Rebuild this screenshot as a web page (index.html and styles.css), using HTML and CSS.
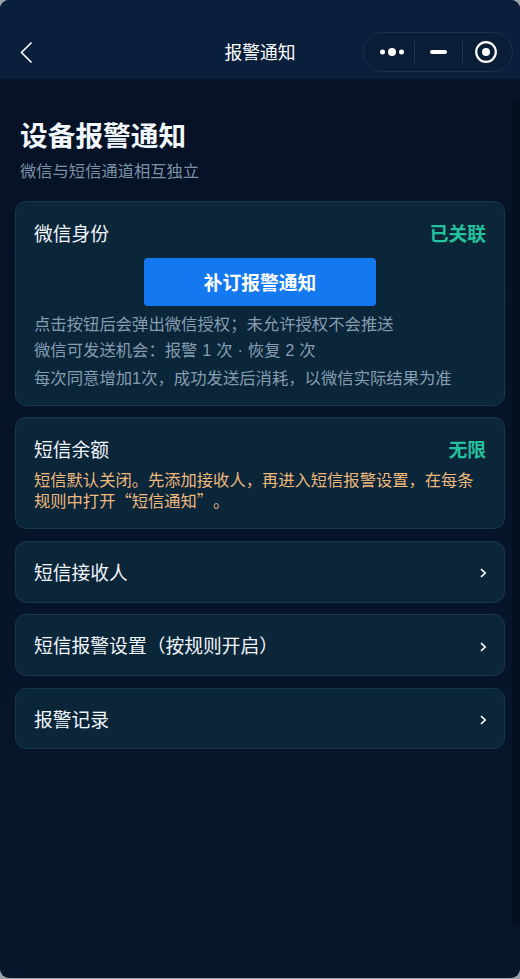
FILE: index.html
```html
<!DOCTYPE html>
<html lang="zh-CN">
<head>
<meta charset="utf-8">
<title>报警通知</title>
<link rel="stylesheet" href="styles.css">
</head>
<body>
<div class="app">
  <header class="nav">
    <button class="back" aria-label="返回">
      <svg width="14" height="24" viewBox="0 0 14 24"><path d="M12.5 2.5 L2.5 12.5 L12.5 22.5" fill="none" stroke="#fff" stroke-width="1.6"/></svg>
    </button>
    <div class="nav-title">报警通知</div>
    <div class="capsule">
      <svg class="cap-dots" width="24" height="12" viewBox="0 0 24 12"><circle cx="2.5" cy="6" r="2.5" fill="#fff"/><circle cx="12" cy="6" r="4" fill="#fff"/><circle cx="21.5" cy="6" r="2.5" fill="#fff"/></svg>
      <span class="cap-sep"></span>
      <span class="cap-min"></span>
      <span class="cap-sep"></span>
      <svg class="cap-target" width="24" height="24" viewBox="0 0 24 24"><circle cx="12" cy="12" r="9.8" fill="none" stroke="#fff" stroke-width="2.2"/><circle cx="12" cy="12" r="4" fill="#fff"/></svg>
    </div>
  </header>
  <main class="content">
    <section class="intro">
      <h1>设备报警通知</h1>
      <p>微信与短信通道相互独立</p>
    </section>
    <section class="card card-wechat">
      <div class="row">
        <span class="card-title">微信身份</span>
        <span class="status">已关联</span>
      </div>
      <button class="primary">补订报警通知</button>
      <div class="notes">
        <p>点击按钮后会弹出微信授权；未允许授权不会推送</p>
        <p class="spaced">微信可发送机会：报警 <span class="latin">1</span> 次 <span class="latin">·</span> 恢复 <span class="latin">2</span> 次</p>
        <p>每次同意增加<span class="latin">1</span>次，成功发送后消耗，以微信实际结果为准</p>
      </div>
    </section>
    <section class="card card-sms">
      <div class="row">
        <span class="card-title">短信余额</span>
        <span class="status">无限</span>
      </div>
      <p class="warn">短信默认关闭。先添加接收人，再进入短信报警设置，在每条规则中打开“短信通知”。</p>
    </section>
    <a class="card link"><span class="card-title">短信接收人</span><span class="chev"><svg width="7" height="10" viewBox="0 0 7 10"><path d="M1 1.2 L5.2 5 L1 8.8" fill="none" stroke="#fff" stroke-width="1.6"/></svg></span></a>
    <a class="card link"><span class="card-title">短信报警设置（按规则开启）</span><span class="chev"><svg width="7" height="10" viewBox="0 0 7 10"><path d="M1 1.2 L5.2 5 L1 8.8" fill="none" stroke="#fff" stroke-width="1.6"/></svg></span></a>
    <a class="card link"><span class="card-title">报警记录</span><span class="chev"><svg width="7" height="10" viewBox="0 0 7 10"><path d="M1 1.2 L5.2 5 L1 8.8" fill="none" stroke="#fff" stroke-width="1.6"/></svg></span></a>
  </main>
  <div class="scroll-track"></div>
</div>
</body>
</html>
```
FILE: styles.css
```css
* { box-sizing: border-box; }
html, body { margin: 0; padding: 0; height: 979px; overflow: hidden; background: #9aa3ab; }
body { font-family: "Noto Sans CJK SC", "Noto Sans", sans-serif; text-spacing-trim: space-all; }
p, h1 { margin: 0; }
.app {
  position: relative;
  height: 978px;
  border-radius: 9px;
  overflow: hidden;
  background: linear-gradient(180deg, #061125 0%, #06172c 100%);
  color: #fff;
}
.nav {
  position: relative;
  height: 79px;
  background: #0a1f3b;
  display: flex;
  align-items: flex-end;
  padding: 0 7px 7px 19px;
  justify-content: space-between;
}
.back { background: none; border: 0; padding: 0; height: 24px; width: 14px; margin-bottom: 8px; display: block; }
.nav-title {
  position: absolute;
  left: 0; right: 0; top: 39px;
  text-align: center;
  font-size: 17.8px;
  line-height: 24px;
  color: #fff;
}
.capsule {
  width: 150px;
  height: 40px;
  border: 1px solid #17304c;
  border-radius: 20px;
  background: #0a1d36;
  display: flex;
  align-items: center;
  padding-left: 16px;
}
.cap-dots { margin-right: 10px; }
.cap-sep { width: 1px; height: 22px; background: #1f3852; }
.cap-min { width: 17px; height: 4px; border-radius: 2px; background: #fff; margin: 0 15.5px 0 14.5px; }
.cap-target { margin-left: 10.5px; }
.content {
  padding: 35px 15px 0;
  display: flex;
  flex-direction: column;
  gap: 11.6px;
}
.intro { padding: 0 5px 7.6px; }
.intro h1 { font-size: 27.7px; line-height: 41px; font-weight: 700; color: #f2f7fc; }
.intro p { font-size: 16.3px; line-height: 24px; margin-top: 3px; color: #7b91a5; }
.card {
  display: block;
  padding: 0 18px;
  border: 1px solid #17384f;
  border-radius: 11px;
  background: #0b2539;
}
.row { display: flex; justify-content: space-between; align-items: center; }
.card-title { font-size: 18.8px; line-height: 28px; color: #f1f6fb; }
.status { font-size: 18.8px; line-height: 28px; font-weight: 700; color: #24c29c; }
.card-wechat { height: 204.5px; padding-top: 17px; }
.primary {
  display: block;
  width: 232px;
  height: 48px;
  margin: 11px auto 3.5px;
  padding: 0 0 2px;
  border: 0;
  border-radius: 4px;
  background: #1479f0;
  color: #fff;
  font-family: inherit;
  font-size: 18.8px;
  font-weight: 700;
}
.notes p { font-size: 16.35px; line-height: 26.5px; color: #869db1; white-space: nowrap; }
.notes .spaced { word-spacing: 1.2px; }
.latin { font-family: "Liberation Sans", sans-serif; }
.card-sms { height: 112px; padding-top: 17px; }
.warn { font-size: 16.3px; line-height: 21px; color: #f0b97c; margin-top: 6px; }
.link {
  height: 61.8px;
  display: flex;
  align-items: center;
  justify-content: space-between;
}
.chev { display: block; line-height: 0; margin: 3px -1px 0 0; }
.scroll-track {
  position: absolute;
  right: 0;
  top: 100px;
  width: 8px;
  height: 825px;
  background: #04101f;
}
```
